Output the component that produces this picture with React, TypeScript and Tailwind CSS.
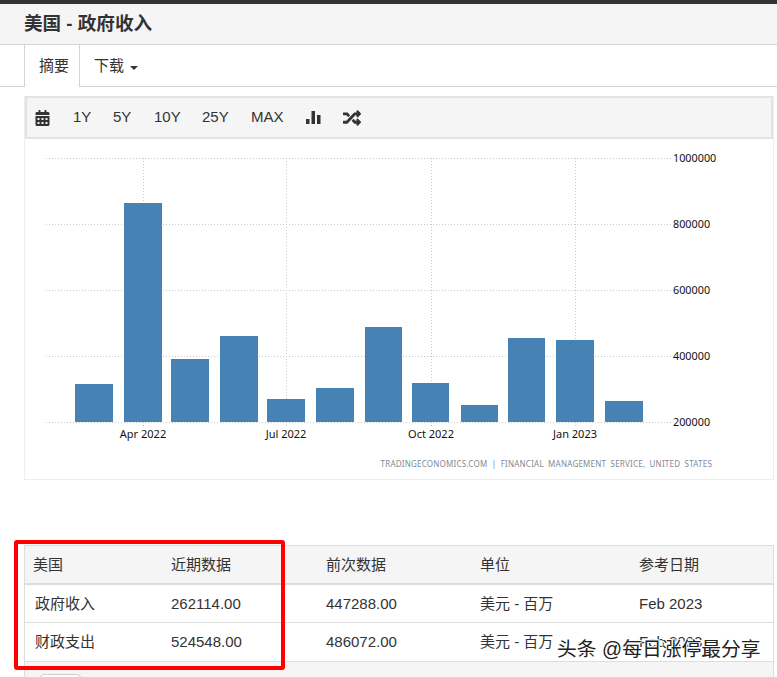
import { FaCalendarAlt, FaRandom } from "react-icons/fa";

const BARS = [
  { x: 75, w: 38, top: 384 },
  { x: 124, w: 38, top: 203 },
  { x: 171, w: 38, top: 359 },
  { x: 220, w: 38, top: 336 },
  { x: 267, w: 38, top: 399 },
  { x: 316, w: 38, top: 388 },
  { x: 365, w: 37, top: 327 },
  { x: 412, w: 37, top: 383 },
  { x: 461, w: 37, top: 405 },
  { x: 508, w: 37, top: 338 },
  { x: 556, w: 38, top: 340 },
  { x: 605, w: 38, top: 401 },
];

const Y_TICKS = [
  { y: 158, label: "1000000" },
  { y: 224, label: "800000" },
  { y: 290, label: "600000" },
  { y: 356, label: "400000" },
  { y: 422, label: "200000" },
];

const X_TICKS = [
  { x: 143, label: "Apr 2022" },
  { x: 286, label: "Jul 2022" },
  { x: 431, label: "Oct 2022" },
  { x: 575, label: "Jan 2023" },
];

const RANGES = [
  { label: "1Y", w: "w-[40px]" },
  { label: "5Y", w: "w-[41px]" },
  { label: "10Y", w: "w-[48px]" },
  { label: "25Y", w: "w-[49px]" },
  { label: "MAX", w: "w-[55px]" },
];

const ROWS = [
  { name: "政府收入", latest: "262114.00", prev: "447288.00", unit: "美元 - 百万", date: "Feb 2023", h: "h-[38px] pt-0.5" },
  { name: "财政支出", latest: "524548.00", prev: "486072.00", unit: "美元 - 百万", date: "Feb 2023", h: "h-[39px] pt-px" },
];

const GRID = "grid grid-cols-[146px_155px_154px_159px_1fr]";
const CHART_FONT = "'Noto Sans', sans-serif";

function Chart() {
  // svg origin sits at page x=25, y=139
  return (
    <svg width="748" height="340" viewBox="25 139 748 340" className="block">
      {X_TICKS.map((t) => (
        <g key={t.x}>
          <line x1={t.x + 0.5} x2={t.x + 0.5} y1={158} y2={426} stroke="#c8c8c8" strokeDasharray="1 2" />
          <text x={t.x} y={438} textAnchor="middle" fontSize="11" fontFamily={CHART_FONT} fill="#111">
            {t.label}
          </text>
        </g>
      ))}
      {Y_TICKS.map((t) => (
        <g key={t.y}>
          <line x1={46} x2={671} y1={t.y + 0.5} y2={t.y + 0.5} stroke="#c8c8c8" strokeDasharray="1 2" />
          <text x={673} y={t.y + 4} fontSize="10.8" fontFamily={CHART_FONT} fill="#111">
            {t.label}
          </text>
        </g>
      ))}
      {BARS.map((b) => (
        <rect key={b.x} x={b.x} y={b.top} width={b.w} height={422 - b.top} fill="#4682b4" />
      ))}
      <text x={712} y={467} textAnchor="end" fontSize="8" letterSpacing="0.22" wordSpacing="2" fontFamily={CHART_FONT} fill="#7f8a94">
        TRADINGECONOMICS.COM | FINANCIAL MANAGEMENT SERVICE, UNITED STATES
      </text>
    </svg>
  );
}

export default function App() {
  return (
    <div className="relative h-[677px] w-[777px] overflow-hidden bg-white font-['Liberation_Sans','Noto_Sans_CJK_SC',sans-serif] text-[15px] text-[#333]">
      <div className="h-1 bg-[#333]" />
      <div className="flex h-[41px] items-center border-b border-[#d4d4d4] bg-[#f5f5f5] pl-6 text-[18.6px] font-bold">
        美国 - 政府收入
      </div>

      <div className="flex h-[42px] border-b border-[#d4d4d4] pl-6">
        <div className="-mb-px flex w-[56px] items-center justify-center border-x border-[#d4d4d4] bg-white pl-1">摘要</div>
        <div className="flex items-center pl-[14px] pt-0.5">
          下载
          <span className="ml-1.5 mt-0.5 border-x-4 border-t-4 border-x-transparent border-t-[#333]" />
        </div>
      </div>

      <div className="ml-6 mt-[9px] w-[750px] border-x border-[#eeeeee]">
        <div className="flex h-[43px] items-center border-2 border-[#e3e3e3] bg-[#f5f5f5] pl-[8px]">
          <FaCalendarAlt className="mr-[23px] h-[16px] w-[15px] text-[#333]" />
          {RANGES.map((r) => (
            <span key={r.label} className={r.w}>
              {r.label}
            </span>
          ))}
          <svg width="15" height="15" viewBox="0 0 15 15" className="mr-[22px] text-[#333]">
            <path d="M0 9h3.500v5H0zM5.500 1H9v13H5.500zM11 5h3.500v9H11z" fill="currentColor" />
          </svg>
          <FaRandom className="h-[18px] w-[18px] text-[#333]" />
        </div>
        <div className="h-[341px] border-b border-[#eeeeee]">
          <Chart />
        </div>
      </div>

      <div className="ml-6 mt-[65px] w-[750px] border-x border-[#dddddd]">
        <div className={`${GRID} h-[40px] items-center border-y border-[#dddddd] border-b-2 bg-[#f5f5f5] pt-px`}>
          <span className="pl-2">美国</span>
          <span>近期数据</span>
          <span>前次数据</span>
          <span>单位</span>
          <span>参考日期</span>
        </div>
        {ROWS.map((row) => (
          <div key={row.name} className={`${GRID} ${row.h} items-center border-b border-[#dddddd]`}>
            <span className="pl-2.5">{row.name}</span>
            <span>{row.latest}</span>
            <span>{row.prev}</span>
            <span>{row.unit}</span>
            <span>{row.date}</span>
          </div>
        ))}
        <div className="h-[20px] bg-[#f5f5f5] pl-[15px] pt-3">
          <div className="h-[20px] w-[41px] rounded-sm border border-[#cccccc] bg-white" />
        </div>
      </div>

      {/* red annotation over the table */}
      <div className="absolute left-[14px] top-[540px] h-[130px] w-[271px] rounded-[3px] border-4 border-[#ff0000]" />

      {/* watermark */}
      <div className="absolute left-[557px] top-[637px] text-[19.8px] leading-6 text-[#222] [text-shadow:1px_1px_0_#fff,-1px_-1px_0_#fff,1px_-1px_0_#fff,-1px_1px_0_#fff]">
        头条 @每日涨停最分享
      </div>
    </div>
  );
}
